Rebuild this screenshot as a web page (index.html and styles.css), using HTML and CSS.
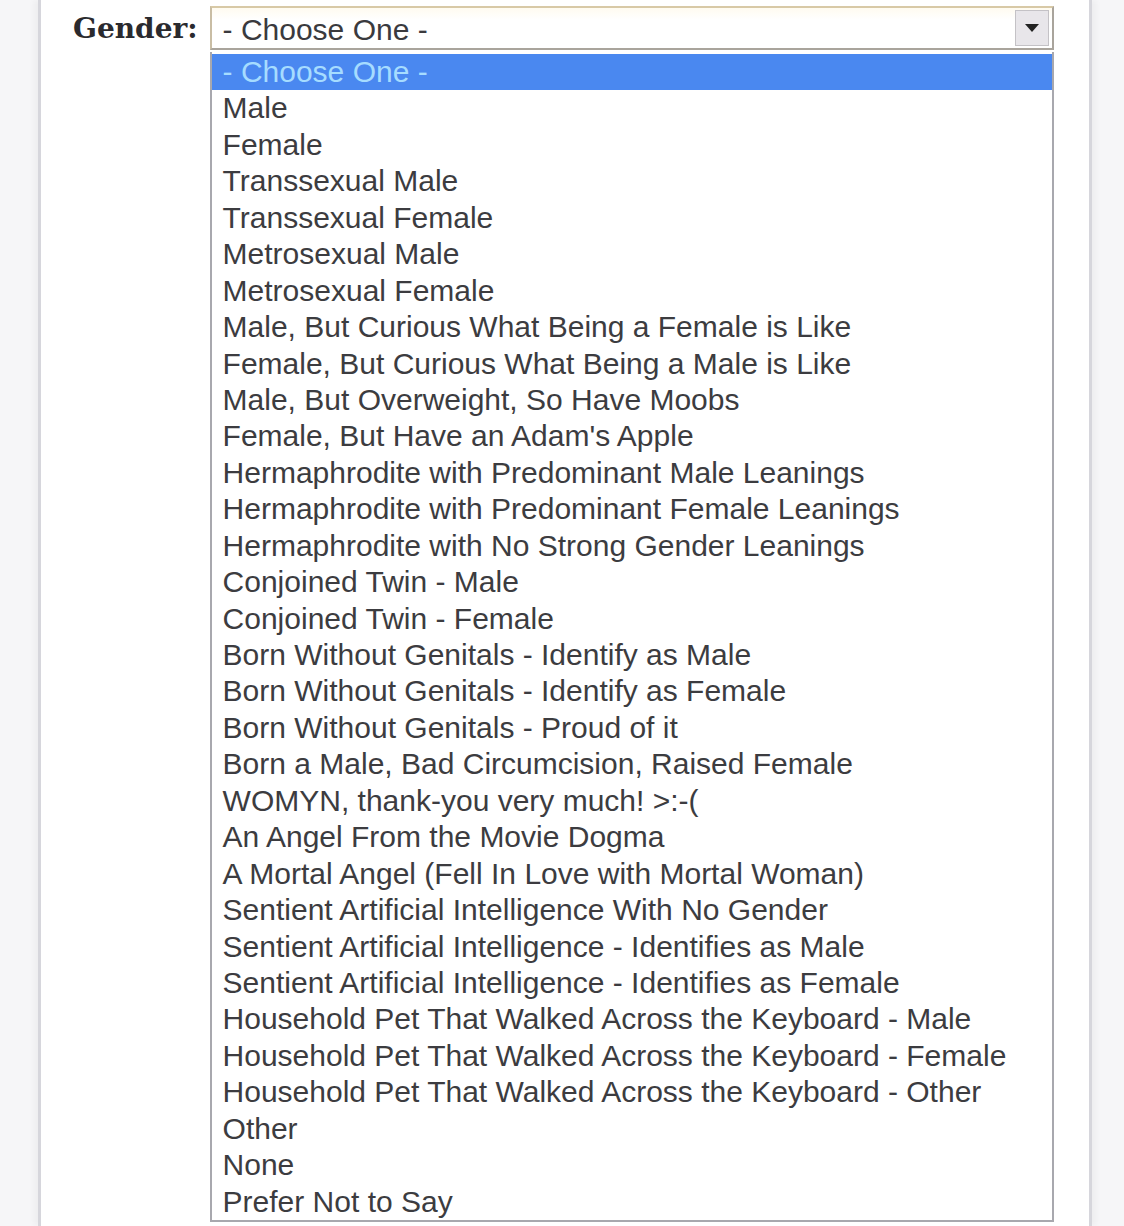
FILE: index.html
```html
<!DOCTYPE html>
<html>
<head>
<meta charset="utf-8">
<link rel="stylesheet" href="styles.css">
</head>
<body>
<div class="panel">
  <div class="field">
    <label class="label">Gender:</label>
    <div class="select-wrap">
      <div class="select">
        <span class="select-value">- Choose One -</span>
        <span class="select-btn"><svg width="14" height="8" viewBox="0 0 14 8"><path d="M0 0H14L7 8Z" fill="#222"/></svg></span>
      </div>
      <ul class="list">
        <li class="selected">- Choose One -</li>
        <li>Male</li>
        <li>Female</li>
        <li>Transsexual Male</li>
        <li>Transsexual Female</li>
        <li>Metrosexual Male</li>
        <li>Metrosexual Female</li>
        <li>Male, But Curious What Being a Female is Like</li>
        <li>Female, But Curious What Being a Male is Like</li>
        <li>Male, But Overweight, So Have Moobs</li>
        <li>Female, But Have an Adam's Apple</li>
        <li>Hermaphrodite with Predominant Male Leanings</li>
        <li>Hermaphrodite with Predominant Female Leanings</li>
        <li>Hermaphrodite with No Strong Gender Leanings</li>
        <li>Conjoined Twin - Male</li>
        <li>Conjoined Twin - Female</li>
        <li>Born Without Genitals - Identify as Male</li>
        <li>Born Without Genitals - Identify as Female</li>
        <li>Born Without Genitals - Proud of it</li>
        <li>Born a Male, Bad Circumcision, Raised Female</li>
        <li>WOMYN, thank-you very much! &gt;:-(</li>
        <li>An Angel From the Movie Dogma</li>
        <li>A Mortal Angel (Fell In Love with Mortal Woman)</li>
        <li>Sentient Artificial Intelligence With No Gender</li>
        <li>Sentient Artificial Intelligence - Identifies as Male</li>
        <li>Sentient Artificial Intelligence - Identifies as Female</li>
        <li>Household Pet That Walked Across the Keyboard - Male</li>
        <li>Household Pet That Walked Across the Keyboard - Female</li>
        <li>Household Pet That Walked Across the Keyboard - Other</li>
        <li>Other</li>
        <li>None</li>
        <li>Prefer Not to Say</li>
      </ul>
    </div>
  </div>
</div>
</body>
</html>
```

FILE: styles.css
```css
html, body {
  margin: 0;
  padding: 0;
  height: 100%;
}
body {
  background: #f6f6f8;
  overflow: hidden;
}
.panel {
  margin: 0 32px 0 38px;
  height: 1226px;
  background: #fff;
  border-left: 3px solid #d6d6dc;
  border-right: 3px solid #d6d6dc;
  box-shadow: -4px 0 6px rgba(0,0,0,0.04), 4px 0 6px rgba(0,0,0,0.04);
  box-sizing: border-box;
  padding: 6px 0 0 32px;
}
.field {
  display: flex;
  align-items: flex-start;
  gap: 12px;
}
.label {
  font-family: "DejaVu Serif", "Liberation Serif", serif;
  font-weight: bold;
  font-size: 28px;
  color: #2a2a2e;
  line-height: 44px;
  margin-top: 1px;
}
.select-wrap {
  position: relative;
  width: 844px;
}
.select {
  height: 44px;
  box-sizing: border-box;
  border: 2px solid #a9a49c;
  border-top-color: #d8c9a6;
  border-left-color: #c9bda4;
  background: linear-gradient(#fffbf0, #fff 30%);
  display: flex;
  align-items: center;
  justify-content: space-between;
  padding: 0 3px 0 11px;
}
.select-value {
  font-family: "Liberation Sans", Arial, sans-serif;
  font-size: 30px;
  color: #3a3a3e;
  margin-top: 3px;
}
.select-btn {
  width: 34px;
  height: 36px;
  background: #e8e6ea;
  border: 1px solid #c4c2c6;
  box-sizing: border-box;
  display: flex;
  align-items: center;
  justify-content: center;
}
.list {
  position: absolute;
  left: 0;
  top: 46px;
  width: 844px;
  margin: 0;
  padding: 2px 0 0 0;
  list-style: none;
  box-sizing: border-box;
  border: 2px solid #a8a8ae;
  border-top: 0;
  background: #fff;
  height: 1170px;
  overflow: hidden;
}
.list li {
  font-family: "Liberation Sans", Arial, sans-serif;
  font-size: 30px;
  color: #3c3c40;
  height: 36.45px;
  line-height: 36.45px;
  padding-left: 11px;
  white-space: nowrap;
}
.list li.selected {
  background: #4a88f0;
  color: #a6dcff;
  margin: 0 -2px 0 -2px;
  padding-left: 13px;
}
```
